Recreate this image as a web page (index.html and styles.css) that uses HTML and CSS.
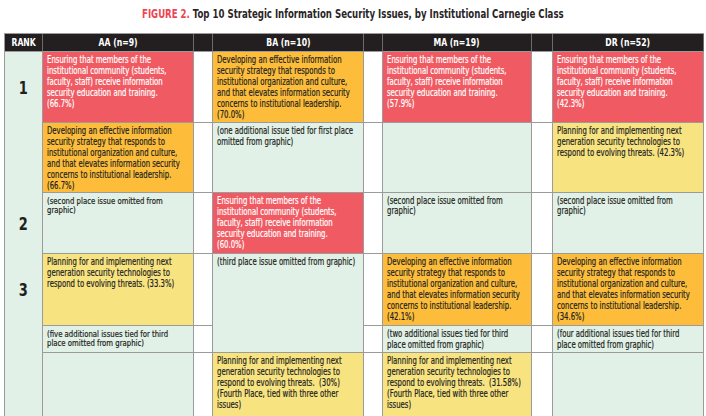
FILE: index.html
```html
<!DOCTYPE html>
<html lang="en">
<head>
<meta charset="utf-8">
<title>Figure 2</title>
<link rel="stylesheet" href="styles.css">
</head>
<body>
<h1 class="title"><span class="tt"><span class="fig">FIGURE 2.</span> Top 10 Strategic Information Security Issues, by Institutional Carnegie Class</span></h1>
<div class="table">
  <div class="hd"><span class="ht">RANK</span></div>
  <div class="hd"><span class="ht">AA (n=9)</span></div>
  <div class="hd"></div>
  <div class="hd"><span class="ht">BA (n=10)</span></div>
  <div class="hd"></div>
  <div class="hd"><span class="ht">MA (n=19)</span></div>
  <div class="hd"></div>
  <div class="hd"><span class="ht">DR (n=52)</span></div>

  <!-- row 1 -->
  <div class="rank"><span class="rt">1</span></div>
  <div class="c red"><span class="t">Ensuring that members of the<br>institutional community (students,<br>faculty, staff) receive information<br>security education and training.<br>(66.7%)</span></div>
  <div class="gap"></div>
  <div class="c orange"><span class="t">Developing an effective information<br>security strategy that responds to<br>institutional organization and culture,<br>and that elevates information security<br>concerns to institutional leadership.<br>(70.0%)</span></div>
  <div class="gap"></div>
  <div class="c red"><span class="t">Ensuring that members of the<br>institutional community (students,<br>faculty, staff) receive information<br>security education and training.<br>(57.9%)</span></div>
  <div class="gap"></div>
  <div class="c red"><span class="t">Ensuring that members of the<br>institutional community (students,<br>faculty, staff) receive information<br>security education and training.<br>(42.3%)</span></div>

  <!-- row 1b -->
  <div class="rank"></div>
  <div class="c orange"><span class="t">Developing an effective information<br>security strategy that responds to<br>institutional organization and culture,<br>and that elevates information security<br>concerns to institutional leadership.<br>(66.7%)</span></div>
  <div class="gap"></div>
  <div class="c green"><span class="t">(one additional issue tied for first place<br>omitted from graphic)</span></div>
  <div class="gap"></div>
  <div class="c green"></div>
  <div class="gap"></div>
  <div class="c yellow"><span class="t">Planning for and implementing next<br>generation security technologies to<br>respond to evolving threats. (42.3%)</span></div>

  <!-- row 2 -->
  <div class="rank"><span class="rt">2</span></div>
  <div class="c green tight"><span class="t">(second place issue omitted from<br>graphic)</span></div>
  <div class="gap"></div>
  <div class="c red"><span class="t">Ensuring that members of the<br>institutional community (students,<br>faculty, staff) receive information<br>security education and training.<br>(60.0%)</span></div>
  <div class="gap"></div>
  <div class="c green mid"><span class="t">(second place issue omitted from<br>graphic)</span></div>
  <div class="gap"></div>
  <div class="c green mid"><span class="t">(second place issue omitted from<br>graphic)</span></div>

  <!-- row 3 -->
  <div class="rank"><span class="rt">3</span></div>
  <div class="c yellow"><span class="t">Planning for and implementing next<br>generation security technologies to<br>respond to evolving threats. (33.3%)</span></div>
  <div class="gap"></div>
  <div class="c green span2"><span class="t">(third place issue omitted from graphic)</span></div>
  <div class="gap"></div>
  <div class="c orange"><span class="t">Developing an effective information<br>security strategy that responds to<br>institutional organization and culture,<br>and that elevates information security<br>concerns to institutional leadership.<br>(42.1%)</span></div>
  <div class="gap"></div>
  <div class="c orange"><span class="t">Developing an effective information<br>security strategy that responds to<br>institutional organization and culture,<br>and that elevates information security<br>concerns to institutional leadership.<br>(34.6%)</span></div>

  <!-- row 3b -->
  <div class="rank"></div>
  <div class="c green tight"><span class="t">(five additional issues tied for third<br>place omitted from graphic)</span></div>
  <div class="gap"></div>
  <div class="gap"></div>
  <div class="c green"><span class="t">(two additional issues tied for third<br>place omitted from graphic)</span></div>
  <div class="gap"></div>
  <div class="c green"><span class="t">(four additional issues tied for third<br>place omitted from graphic)</span></div>

  <!-- row 4 -->
  <div class="rank"></div>
  <div class="c green"></div>
  <div class="gap"></div>
  <div class="c yellow"><span class="t">Planning for and implementing next<br>generation security technologies to<br>respond to evolving threats.&nbsp; (30%)<br>(Fourth Place, tied with three other<br>issues)</span></div>
  <div class="gap"></div>
  <div class="c yellow"><span class="t">Planning for and implementing next<br>generation security technologies to<br>respond to evolving threats.&nbsp; (31.58%)<br>(Fourth Place, tied with three other<br>issues)</span></div>
  <div class="gap"></div>
  <div class="c green"></div>
</div>
</body>
</html>
```
FILE: styles.css
```css
html, body {
  margin: 0;
  padding: 0;
  background: #ffffff;
  overflow: hidden;
}

body {
  width: 706px;
  height: 416px;
  font-family: "DejaVu Sans Condensed", "DejaVu Sans", sans-serif;
  font-stretch: condensed;
  color: #231f20;
}

.title {
  margin: 0;
  height: 33px;
  box-sizing: border-box;
  padding-top: 6px;
  font-size: 13px;
  line-height: 16px;
  font-weight: bold;
  text-align: center;
  color: #2a2526;
  white-space: nowrap;
}

.tt {
  display: inline-block;
  transform: scaleX(0.735);
  transform-origin: 50% 0;
}

.fig {
  color: #ee4552;
}

.table {
  margin-left: 4px;
  width: 700px;
  box-sizing: border-box;
  display: grid;
  grid-template-columns: 38px 151px 19px 151px 19px 149px 21px 151px;
  grid-template-rows: 18px 71px 70px 61px 72px 27px 66px;
  border-left: 1px solid #9b9b9b;
  border-top: 1px solid #9b9b9b;
}

.table > div {
  box-sizing: border-box;
  border-right: 1px solid #9b9b9b;
  border-bottom: 1px solid #9b9b9b;
}

.hd {
  background: #231f20;
  color: #ffffff;
  font-weight: bold;
  font-size: 11px;
  line-height: 17px;
  text-align: center;
  white-space: nowrap;
  border-right-color: #6d6a6b !important;
}

.ht {
  display: inline-block;
  transform: scaleX(0.78);
  transform-origin: 50% 0;
}

.table > .rank {
  background: #e1f1e7;
  border-bottom: none;
  display: flex;
  align-items: center;
  justify-content: center;
  font-weight: bold;
  font-size: 17px;
  color: #231f20;
}

.rt {
  display: inline-block;
  transform: scaleX(0.85);
}

.gap {
  background: #ffffff;
}

.c {
  padding: 2px 4px 0 4px;
  font-size: 10px;
  line-height: 11px;
  white-space: nowrap;
  -webkit-text-stroke: 0.2px currentColor;
}

.t {
  display: inline-block;
  transform: scaleX(0.77);
  transform-origin: 0 0;
}

.c.tight {
  font-size: 9px;
  line-height: 9px;
  padding-top: 4px;
}

.c.tight .t {
  transform: scaleX(0.855);
}

.c.mid {
  line-height: 10px;
  padding-top: 3px;
}

.span2 {
  grid-row: span 2;
}

.red {
  background: #f05a63;
  color: #ffffff;
}

.orange {
  background: #fdbd3b;
}

.yellow {
  background: #f8e381;
}

.green {
  background: #e1f1e7;
}
```
